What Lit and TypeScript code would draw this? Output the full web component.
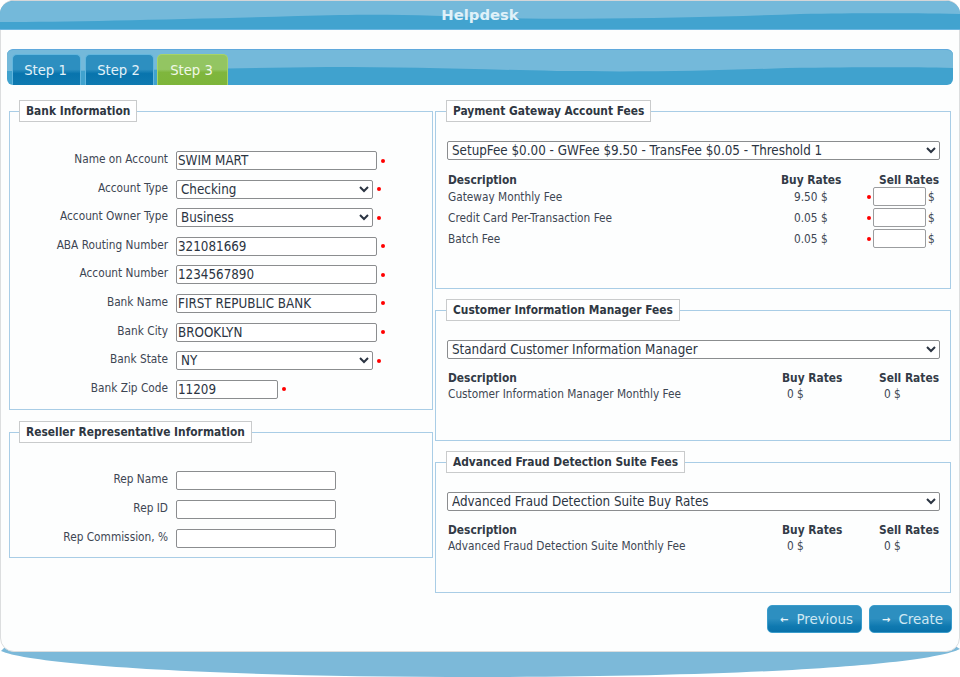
import { LitElement, html, css } from "lit";
import { customElement } from "lit/decorators.js";

const bankRows: { label: string; kind: string; value: string }[] = [
  { label: "Name on Account", kind: "long", value: "SWIM MART" },
  { label: "Account Type", kind: "select", value: "Checking" },
  { label: "Account Owner Type", kind: "select", value: "Business" },
  { label: "ABA Routing Number", kind: "long", value: "321081669" },
  { label: "Account Number", kind: "long", value: "1234567890" },
  { label: "Bank Name", kind: "long", value: "FIRST REPUBLIC BANK" },
  { label: "Bank City", kind: "long", value: "BROOKLYN" },
  { label: "Bank State", kind: "select", value: "NY" },
  { label: "Bank Zip Code", kind: "short", value: "11209" },
];

const gatewayRows = [
  { name: "Gateway Monthly Fee", buy: "9.50" },
  { name: "Credit Card Per-Transaction Fee", buy: "0.05" },
  { name: "Batch Fee", buy: "0.05" },
];

@customElement("app-root")
export class AppRoot extends LitElement {
  static styles = css`
    :host {
      display: block;
      position: relative;
      width: 960px;
      height: 677px;
      overflow: hidden;
      background: #fff;
      font-family: "DejaVu Sans Condensed", "DejaVu Sans", sans-serif;
      font-stretch: condensed;
      font-size: 11.75px;
      color: #3d4653;
    }
    * { box-sizing: border-box; }
    .bottom-wave { position: absolute; left: 0; top: 640px; display: block; }
    .card {
      position: relative;
      width: 960px;
      height: 652px;
      background: #fdfefe;
      border: 1px solid #dcdedf;
      border-radius: 14px;
      display: flex;
      flex-direction: column;
    }
    .header {
      position: relative;
      margin: -1px -1px 0;
      height: 30px;
      border-top: 1px solid #d4d6d8;
      border-bottom: 1px solid #6db6e0;
      border-radius: 14px 14px 0 0;
      overflow: hidden;
      background: #42a3cf;
      display: flex;
      align-items: center;
      justify-content: center;
    }
    .wave { position: absolute; left: 0; top: 0; display: block; }
    .title {
      position: relative;
      color: #dff1f9;
      font: bold 14.8px "DejaVu Sans", Verdana, sans-serif;
      margin-top: -1px;
    }
    .tabs {
      position: relative;
      margin: 19px 6px 0 6px;
      height: 36px;
      border-radius: 6px;
      border-top: 1px solid #5fa9dc;
      background: #40a2ce;
      overflow: hidden;
      display: flex;
      align-items: flex-end;
      padding-left: 5px;
      gap: 4px;
    }
    .tab {
      position: relative;
      height: 31px;
      width: 69px;
      border: 1px solid #62b6dd;
      border-bottom: 0;
      border-radius: 5px 5px 0 0;
      background: linear-gradient(#2d8fc0 0 48%, #0874ad 62%, #0f7ab0 100%);
      color: #e2f2f9;
      font: 13.2px "DejaVu Sans", Verdana, sans-serif;
      display: flex;
      align-items: center;
      justify-content: center;
      padding-right: 2px;
    }
    .tab.active {
      width: 71px;
      margin-left: -1px;
      border-color: #a6d468;
      background: linear-gradient(#93c562 0 48%, #7fb63d 58%, #7db53a 100%);
      color: #f0f8e6;
    }
    .columns {
      display: flex;
      padding: 15px 8px 0 8px;
      gap: 2px;
      align-items: flex-start;
    }
    .col { display: flex; flex-direction: column; }
    .left { width: 425px; gap: 11px; }
    .right { width: 516px; gap: 10px; }
    fieldset {
      margin: 0;
      min-width: 0;
      padding: 0;
      border: 1px solid #a9cde6;
      display: block;
    }
    legend {
      margin-left: 9px;
      padding: 0 6px;
      height: 22px;
      background: #fff;
      border: 1px solid #c9cbcc;
      font-weight: bold;
      font-size: 11.85px;
      line-height: 20px;
      color: #2f3742;
      white-space: nowrap;
    }
    .panel legend { margin-left: -1px; }
    .bank { height: 310px; padding-top: 29px; }
    .rep { height: 137px; padding-top: 28px; }
    .form {
      display: grid;
      grid-template-columns: 158px 1fr;
      grid-auto-rows: 28.6px;
      column-gap: 8px;
      align-items: start;
    }
    .rep .form { grid-auto-rows: 28.9px; }
    .lbl { text-align: right; white-space: nowrap; line-height: 16px; }
    .ctl { display: flex; align-items: center; height: 19px; }
    .in {
      height: 19px;
      border: 1px solid #8b8d8f;
      border-radius: 2px;
      background: #fff;
      color: #2b3442;
      font-family: inherit;
      font-stretch: condensed;
      font-size: 13.3px;
      line-height: 17px;
      padding: 0 1px;
      margin: 0;
      outline: none;
    }
    .long { width: 201px; }
    .short { width: 102px; }
    .rep-in { width: 160px; }
    .sel { width: 197px; padding-left: 0; }
    select.in { padding-left: 0; }
    .req {
      display: block;
      width: 4px;
      height: 4px;
      border-radius: 50%;
      background: #f00;
      margin-left: 4px;
      flex: none;
    }
    .gw { height: 189px; }
    .cim { height: 142px; }
    .fraud { height: 142px; }
    .panel { padding: 19px 11px 0 11px; }
    .wide { width: 493px; display: block; }
    .fees {
      display: grid;
      grid-template-columns: 333px 60px 38px 60px;
      margin-top: 12px;
      padding-left: 1px;
    }
    .fees.alt {
      grid-template-columns: 334px 60px 37px 60px;
      margin-top: 11px;
    }
    .fees > * { height: 21px; white-space: nowrap; line-height: 16px; }
    .fees .th { font-weight: bold; font-size: 11.85px; color: #333b47; height: 17px; }
    .fees.alt .th { height: 16px; }
    .fees .sp { grid-column: 3; }
    .fees .nm { grid-column: 1; }
    .fees .buy { padding-left: 13px; }
    .fees .plain { height: 16px; }
    .fees.alt .buy { padding-left: 5px; }
    .fees.alt .sell { padding-left: 5px; }
    .sell-cell { display: flex; align-items: flex-start; grid-column: 3 / 5; padding-left: 26px; }
    .sell-cell .req { margin: 6px 2px 0 0; }
    .rate {
      width: 53px;
      height: 19px;
      border: 1px solid #9b9d9f;
      border-radius: 2px;
      background: #fff;
      margin: -2px 2px 0 0;
      padding: 0;
      outline: none;
    }
    .actions {
      display: flex;
      justify-content: flex-end;
      gap: 7px;
      padding: 12px 7px 0 0;
    }
    .btn {
      height: 28px;
      border: 1px solid #3a9ccb;
      border-radius: 5px;
      background: linear-gradient(#2d8fc0 0 48%, #0f79b0 78%, #0a72aa 100%);
      color: #cfe8f3;
      font: 13.4px "DejaVu Sans", Verdana, sans-serif;
      display: flex;
      align-items: center;
      justify-content: center;
      gap: 8px;
      padding: 0 0 0 4px;
    }
    .btn.prev { width: 95px; }
    .btn.next { width: 83px; }
    .arrow { font-size: 10px; font-weight: bold; color: #e6f4fa; }
  `;

  private req() {
    return html`<span class="req"></span>`;
  }

  private bankControl(r: { kind: string; value: string }) {
    if (r.kind === "select") {
      return html`<select class="in sel"><option>${r.value}</option></select>`;
    }
    return html`<input class="in ${r.kind}" .value=${r.value} />`;
  }

  private rateHead() {
    return html`
      <div class="th nm">Description</div>
      <div class="th">Buy Rates</div>
      <div class="th sp"></div>
      <div class="th">Sell Rates</div>
    `;
  }

  private wave(w: number, h: number, d: string) {
    return html`<svg class="wave" width=${w} height=${h} viewBox="0 0 ${w} ${h}">
      <path d=${d} fill="#74b9da"></path>
    </svg>`;
  }

  private feePanel(cls: string, title: string, option: string, desc: string) {
    return html`
      <fieldset class="panel ${cls}">
        <legend>${title}</legend>
        <select class="in wide"><option>${option}</option></select>
        <div class="fees alt">
          ${this.rateHead()}
          <div class="nm plain">${desc}</div>
          <div class="buy plain">0 $</div>
          <div class="sp plain"></div>
          <div class="sell plain">0 $</div>
        </div>
      </fieldset>
    `;
  }

  render() {
    return html`
      <svg class="bottom-wave" width="960" height="37" viewBox="0 0 960 37">
        <path d="M1 11 C30 24 200 37 480 37 C760 37 930 24 960 9 L952 4 L8 4 Z" fill="#7cb9d9"></path>
      </svg>
      <div class="card">
        <div class="header">
          ${this.wave(960, 29, "M0 0 H960 V13 C900 12 860 12 800 13 C720 16 620 19 500 17 C440 15 400 13 340 14 C220 17 80 21 0 21 Z")}
          <span class="title">Helpdesk</span>
        </div>
        <div class="tabs">
          ${this.wave(946, 36, "M0 0 H946 V18 C900 17 860 17 780 18 C700 21 640 22 550 21 C460 19 400 17 320 17 C220 18 120 21 0 21 Z")}
          <div class="tab">Step 1</div>
          <div class="tab">Step 2</div>
          <div class="tab active">Step 3</div>
        </div>
        <div class="columns">
          <div class="col left">
            <fieldset class="bank">
              <legend>Bank Information</legend>
              <div class="form">
                ${bankRows.map(
                  (r) => html`
                    <div class="lbl">${r.label}</div>
                    <div class="ctl">${this.bankControl(r)}${this.req()}</div>
                  `
                )}
              </div>
            </fieldset>
            <fieldset class="rep">
              <legend>Reseller Representative Information</legend>
              <div class="form">
                ${["Rep Name", "Rep ID", "Rep Commission, %"].map(
                  (l) => html`
                    <div class="lbl">${l}</div>
                    <div class="ctl"><input class="in rep-in" /></div>
                  `
                )}
              </div>
            </fieldset>
          </div>
          <div class="col right">
            <fieldset class="panel gw">
              <legend>Payment Gateway Account Fees</legend>
              <select class="in wide">
                <option>SetupFee $0.00 - GWFee $9.50 - TransFee $0.05 - Threshold 1</option>
              </select>
              <div class="fees">
                ${this.rateHead()}
                ${gatewayRows.map(
                  (r) => html`
                    <div class="nm">${r.name}</div>
                    <div class="buy">${r.buy} $</div>
                    <div class="sell-cell">
                      ${this.req()}<input class="rate" /><span>$</span>
                    </div>
                  `
                )}
              </div>
            </fieldset>
            ${this.feePanel(
              "cim",
              "Customer Information Manager Fees",
              "Standard Customer Information Manager",
              "Customer Information Manager Monthly Fee"
            )}
            ${this.feePanel(
              "fraud",
              "Advanced Fraud Detection Suite Fees",
              "Advanced Fraud Detection Suite Buy Rates",
              "Advanced Fraud Detection Suite Monthly Fee"
            )}
          </div>
        </div>
        <div class="actions">
          <button class="btn prev"><span class="arrow">←</span>Previous</button>
          <button class="btn next"><span class="arrow">→</span>Create</button>
        </div>
      </div>
    `;
  }
}
